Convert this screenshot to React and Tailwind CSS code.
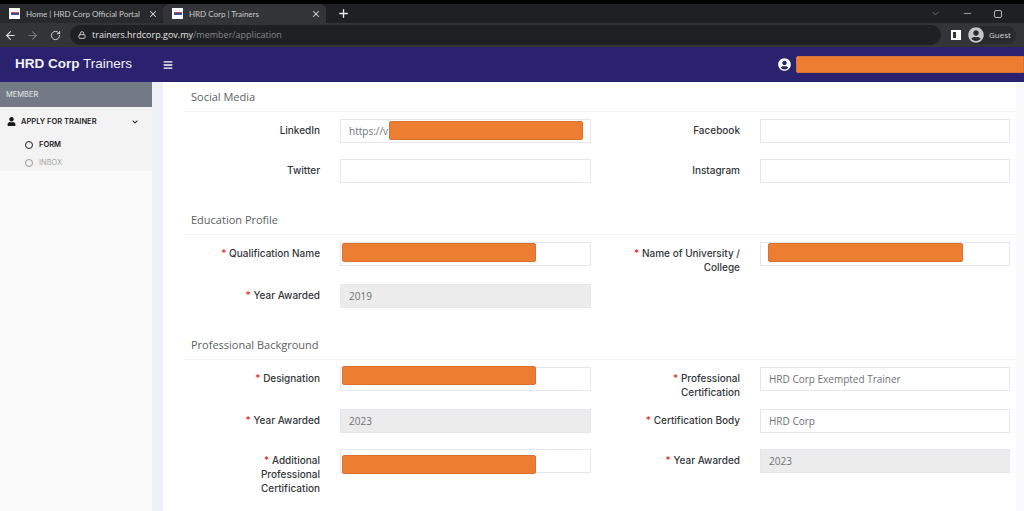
import { ArrowLeft, ArrowRight, ChevronDown, Lock, Minus, Plus, RotateCw, X } from "lucide-react";
import { FaBars, FaChevronDown, FaUser, FaUserCircle } from "react-icons/fa";

const labelFont = "font-['Inter',sans-serif]";
const bodyFont = "font-['Open_Sans',sans-serif]";

function Favicon() {
  return (
    <span className="w-[11px] h-[11px] bg-white flex flex-col items-center justify-center shrink-0">
      <span className="w-[8px] h-[1px] bg-[#c9485b]" />
      <span className="w-[8px] h-[2px] bg-[#3f4f9e]" />
    </span>
  );
}

function Tab({ title, active }) {
  return (
    <div className={`w-[163px] h-[19px] flex items-center pl-[9px] pr-[5px] ${active ? "bg-[#333437] rounded-t-md" : "bg-[#28292c] rounded-br-md"}`}>
      <Favicon />
      <span className="ml-[6px] text-[8px] text-[#c9cacc] whitespace-nowrap flex-1 font-['Lato',sans-serif]">{title}</span>
      <X size={10} strokeWidth={2.5} className="text-[#dcdcdc] shrink-0" />
    </div>
  );
}

function BrowserChrome() {
  return (
    <div className="bg-black pt-[4px]">
      <div className="h-[19px] bg-[#1f2023] flex items-center">
        <Tab title="Home | HRD Corp Official Portal" />
        <Tab title="HRD Corp | Trainers" active />
        <Plus size={13} strokeWidth={2.5} className="ml-[11px] text-[#e8e8e8]" />
        <div className="ml-auto flex items-center text-[#a9aaac]">
          <ChevronDown size={11} className="mr-[21px] text-[#77787a]" />
          <Minus size={11} className="mr-[21px]" />
          <span className="w-[8px] h-[8px] border border-[#b5b5b5] rounded-[2px] mr-[22px]" />
        </div>
      </div>
      <div className="h-[24px] bg-[#333437] flex items-center">
        <ArrowLeft size={13} className="ml-[4px] text-[#dcdcdc]" />
        <ArrowRight size={13} className="ml-[9px] text-[#77787a]" />
        <RotateCw size={11} className="ml-[11px] text-[#dcdcdc]" />
        <div className="ml-[9px] w-[871px] h-[20px] rounded-full bg-[#1f2023] flex items-center pl-[8px]">
          <Lock size={8} strokeWidth={3} className="text-[#c4c5c7]" />
          <span className={`ml-[6px] text-[9px] text-[#e3e3e3] ${bodyFont}`}>
            trainers.hrdcorp.gov.my<span className="text-[#85868a]">/member/application</span>
          </span>
        </div>
        <span className="ml-[10px] w-[10px] h-[10px] border-2 border-white bg-[#333437] flex justify-end">
          <span className="w-[3px] bg-white" />
        </span>
        <div className="ml-[7px] w-[48px] h-[18px] rounded-full bg-[#28292c] flex items-center">
          <FaUserCircle size={16} className="text-[#c4c5c7]" />
          <span className={`ml-[5px] text-[8px] text-[#d5d5d5] ${bodyFont}`}>Guest</span>
        </div>
      </div>
    </div>
  );
}

function AppHeader() {
  return (
    <div className="h-[35px] bg-[#2a226e] flex items-center">
      <div className="w-[152px] pl-[15px] text-[13.5px] text-[#f1f1f6] font-['Liberation_Sans',sans-serif] whitespace-nowrap">
        <span className="font-bold">HRD Corp</span> Trainers
      </div>
      <FaBars size={10} className="ml-[11px] text-white" />
      <FaUserCircle size={13} className="ml-auto text-white" />
      <div className="ml-[5px] w-[228px] h-[17px] bg-[#ed7d31] border border-[#d9722e] rounded-l-[2px]" />
    </div>
  );
}

function Sidebar() {
  return (
    <aside className={`w-[152px] shrink-0 bg-[#f9f9fa] ${labelFont}`}>
      <div className="h-[25px] bg-[#737a85] flex items-center pl-[6px] text-[7.5px] text-[#e8e9eb]">MEMBER</div>
      <div className="h-[64px] bg-[#f3f3f3]">
        <div className="h-[29px] flex items-center pl-[7px] pr-[14px]">
          <FaUser size={9} className="text-[#1a1a1a]" />
          <span className="ml-[5px] text-[7.5px] font-semibold text-[#222]">APPLY FOR TRAINER</span>
          <FaChevronDown size={6} className="ml-auto text-[#222]" />
        </div>
        <div className="flex items-center h-[18px] pl-[25px]">
          <span className="w-[8px] h-[8px] rounded-full border border-[#222]" />
          <span className="ml-[6px] text-[7.5px] font-semibold text-[#222]">FORM</span>
        </div>
        <div className="flex items-center h-[17px] pl-[25px]">
          <span className="w-[8px] h-[8px] rounded-full border border-[#9a9a9a]" />
          <span className="ml-[6px] text-[7.5px] text-[#a8a8a8]">INBOX</span>
        </div>
      </div>
    </aside>
  );
}

function Section({ title, headClass, children }) {
  return (
    <section>
      <div className={`flex items-end border-b border-[#f3f3f5] pl-[7px] pb-[6px] ${headClass}`}>
        <h2 className={`text-[11px] leading-[16px] text-[#5b5f63] ${bodyFont}`}>{title}</h2>
      </div>
      <div className="pt-[7px]">{children}</div>
    </section>
  );
}

function Row({ heightClass, children }) {
  return <div className={`grid grid-cols-[407px_406px] gap-x-[13px] ${heightClass}`}>{children}</div>;
}

// label + input pair; bar = orange block painted over the value
function Field({ label, required, value, disabled, bar }) {
  return (
    <div className="flex">
      <label className={`ml-[26px] w-[110px] shrink-0 text-right text-[10px] leading-[14px] font-medium text-[#34373b] pt-[4px] ${labelFont}`}>
        {required && <span className="text-[#e02b2b]">* </span>}
        {label}
      </label>
      <div className="relative ml-[20px] flex-1 h-[24px]">
        <input
          readOnly
          value={value || ""}
          className={`block w-full h-full border border-[#e6e7ee] px-[8px] text-[10px] text-[#6f7276] outline-none ${disabled ? "bg-[#ececec]" : "bg-white"} ${bodyFont}`}
        />
        {bar}
      </div>
    </div>
  );
}

const Bar = ({ className }) => <div className={`absolute h-[19px] bg-[#ed7d31] border border-[#d9722e] rounded-[2px] ${className}`} />;

export default function App() {
  return (
    <div className="w-[1024px] h-[511px] overflow-hidden bg-white flex flex-col">
      <BrowserChrome />
      <AppHeader />
      <div className="flex flex-1 min-h-0">
        <Sidebar />
        <main className="flex-1 flex bg-[#eef0f8] pl-[11px]">
          <div className="flex-1 bg-white flex">
            <div className="w-[853px] pl-[21px]">
              <Section title="Social Media" headClass="h-[30px]">
                <Row heightClass="h-[40px]">
                  <Field label="LinkedIn" value="https://v" bar={<Bar className="left-[49px] top-[2px] w-[194px]" />} />
                  <Field label="Facebook" />
                </Row>
                <Row heightClass="h-[40px]">
                  <Field label="Twitter" />
                  <Field label="Instagram" />
                </Row>
              </Section>
              <Section title="Education Profile" headClass="h-[36px]">
                <Row heightClass="h-[42px]">
                  <Field required label="Qualification Name" bar={<Bar className="left-[2px] top-[1px] w-[194px]" />} />
                  <Field required label="Name of University / College" bar={<Bar className="left-[8px] top-[1px] w-[195px]" />} />
                </Row>
                <Row heightClass="h-[42px]">
                  <Field required label="Year Awarded" value="2019" disabled />
                  <div />
                </Row>
              </Section>
              <Section title="Professional Background" headClass="h-[34px]">
                <Row heightClass="h-[42px]">
                  <Field required label="Designation" bar={<Bar className="left-[2px] top-[-1px] w-[194px]" />} />
                  <Field required label="Professional Certification" value="HRD Corp Exempted Trainer" />
                </Row>
                <Row heightClass="h-[40px]">
                  <Field required label="Year Awarded" value="2023" disabled />
                  <Field required label="Certification Body" value="HRD Corp" />
                </Row>
                <Row heightClass="h-[42px]">
                  <Field required label="Additional Professional Certification" bar={<Bar className="left-[2px] top-[6px] w-[194px]" />} />
                  <Field required label="Year Awarded" value="2023" disabled />
                </Row>
              </Section>
            </div>
            <div className="flex-1 bg-[#f9f9fb]" />
          </div>
        </main>
      </div>
    </div>
  );
}
